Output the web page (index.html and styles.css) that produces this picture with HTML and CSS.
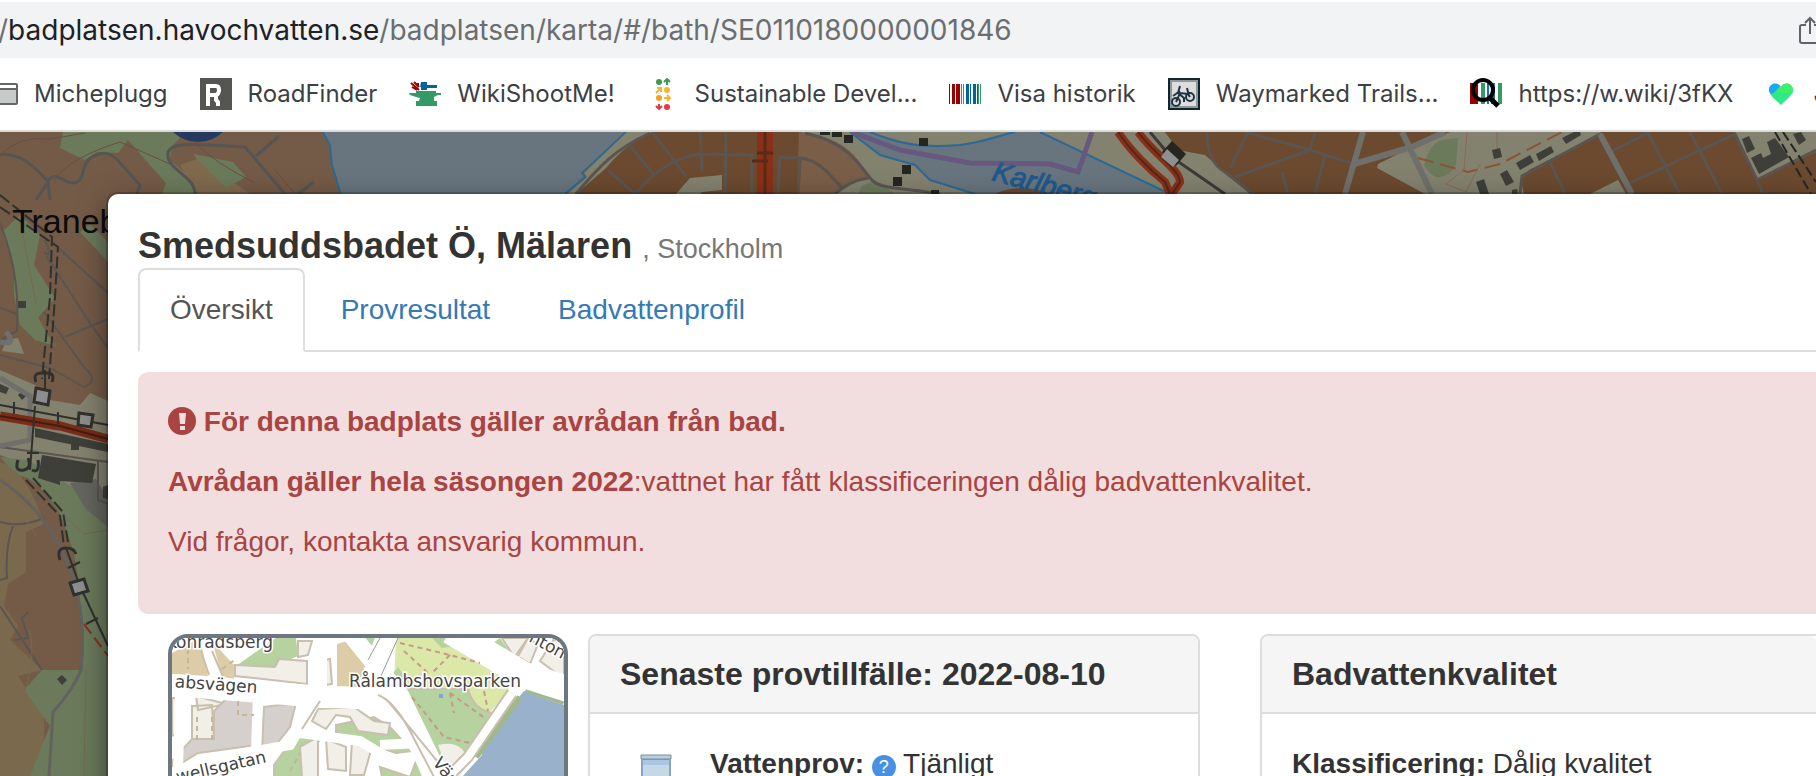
FILE: index.html
```html
<!DOCTYPE html>
<html lang="sv">
<head>
    <meta charset="UTF-8">
    <meta name="viewport" content="width=device-width, initial-scale=1.0">
    <title>Badplatsen</title>
    <link rel="stylesheet" href="styles.css">
</head>
<body>
    <header class="browser">
        <div class="address-bar">
            <div class="url"><span class="url-faded">/</span>badplatsen.havochvatten.se<span class="url-faded">/badplatsen/karta/#/bath/SE0110180000001846</span></div>
            <button class="btn-share" aria-label="Dela">
                <svg width="26" height="30" viewBox="0 0 26 30" fill="none" stroke="#5f6368" stroke-width="2">
                    <path d="M8 10H4a2 2 0 0 0-2 2v14a2 2 0 0 0 2 2h16a2 2 0 0 0 2-2V12a2 2 0 0 0-2-2h-4M12 19V3M7 8l5-5 5 5"/>
                </svg>
            </button>
        </div>
        <nav class="bookmarks">
            <a class="bookmark" href="#">
                <svg class="icon" viewBox="0 0 32 32">
                    <rect x="1" y="6" width="30" height="20" rx="1" fill="#c8c9c9" stroke="#666" stroke-width="2"/>
                    <path d="M2 8.500h28" stroke="#fff" stroke-width="3"/>
                    <path d="M2 11h28" stroke="#666" stroke-width="2"/>
                </svg>
                Micheplugg
            </a>
            <a class="bookmark" href="#">
                <svg class="icon" viewBox="0 0 32 32">
                    <path fill="#555552" d="M0 0h32v32H0z"/>
                    <path fill="none" stroke="#fff" stroke-width="4" d="M8 27V8h8q3 0 3 4t-3 5H8m8 0v5l2 2v4M6 26h4"/>
                </svg>
                RoadFinder
            </a>
            <a class="bookmark" href="#">
                <svg class="icon" viewBox="0 0 32 32">
                    <path fill="#396" d="M0 15h7v-2h20v2h5v2h-3l-4 2v4h3v5H7v-5h3l1-3-4-1-6-2z"/>
                    <path fill="#069" d="M12 4h6v3h10v3H18v2h-6V9h-1z"/>
                    <path stroke="#900" stroke-width="2" d="M2 5l8 7M5 4l5 5M3 9l5 3M9 5v3"/>
                </svg>
                WikiShootMe!
            </a>
            <a class="bookmark" href="#">
                <svg class="icon" viewBox="0 0 32 32" fill="none" stroke-width="2">
                    <circle cx="12" cy="4" r="3" fill="#3f9b4c"/>
                    <path stroke="#3f9b4c" d="M20 7V2M17 4l3-3 3 3"/>
                    <circle cx="20" cy="12" r="3" fill="#f9b42c"/>
                    <path stroke="#f9b42c" d="M9 15l5-5M10 10h4v4"/>
                    <circle cx="12" cy="20" r="3" fill="#f3a020"/>
                    <path stroke="#f9b42c" d="M17 20h6M20 17l3 3-3 3"/>
                    <circle cx="20" cy="29" r="3" fill="#e5354a"/>
                    <path stroke="#e5354a" d="M12 26v5M9 28l3 3 3-3"/>
                </svg>
                Sustainable Devel...
            </a>
            <a class="bookmark" href="#">
                <svg class="icon" viewBox="0 0 32 32">
                    <path fill="#900" d="M0 6h1v20H0zM3 6h3v20H3zM7 6h4v20H7z"/>
                    <path fill="#396" d="M12 6h1v20h-1zM14 6h1v20h-1zM29 6h1v20h-1zM31 6h1v20h-1z"/>
                    <path fill="#069" d="M17 6h3v20h-3zM21 6h1v20h-1zM24 6h3v20h-3zM28 6h1v20h-1z"/>
                </svg>
                Visa historik
            </a>
            <a class="bookmark" href="#">
                <svg class="icon" viewBox="0 0 32 32" fill="none">
                    <path fill="#ddd" stroke="#10262d" stroke-width="2" d="M1 1h30v30H1z"/>
                    <path stroke="#8d989e" stroke-width="2" d="M3 3h26v26H3z"/>
                    <g stroke="#1f3440" stroke-width="2">
                        <circle cx="22" cy="19" r="4"/>
                        <circle cx="8" cy="24" r="4"/>
                        <path d="M8 24l4-9 8 1 2 3M12 8l-2 7 6 5v4M19 10l2 8M5 18l7-5"/>
                    </g>
                </svg>
                Waymarked Trails...
            </a>
            <a class="bookmark" href="#">
                <svg class="icon" viewBox="0 0 32 32" fill="none">
                    <path fill="#900" d="M0 5h8v21H0z"/>
                    <path fill="#396" d="M11 5h4v21h-4zM28 5h4v21h-4z"/>
                    <path fill="#1f6fae" d="M17 5h2v21h-2zM21 5h4v21h-4z"/>
                    <circle cx="13" cy="12" r="10" stroke="#000" stroke-width="4"/>
                    <path stroke="#000" stroke-width="5" d="M19 19l9 9"/>
                </svg>
                https://w.wiki/3fKX
            </a>
            <a class="bookmark" href="#">
                <svg class="icon" viewBox="0 0 32 32">
                    <path fill="#2fe88a" d="M16 27C10 21 4 17 4 12c0-7 9-9 12-3 3-6 12-4 12 3 0 5-6 9-12 15z"/>
                    <path fill="#1aa7f5" d="M4 12c0-7 8-8 11-4-3 3-4 6-9 8q-2-2-2-4z"/>
                    <path fill="#3cf06a" d="M16 9c3-6 12-4 12 3q0 2-1 4L12 14z"/>
                </svg>
                J
            </a>
        </nav>
    </header>

    <main class="page">
        <svg class="map" viewBox="0 132 1816 644" preserveAspectRatio="xMinYMin slice" fill="none" aria-hidden="true">
            <path fill="#745b47" d="M0 132h1816v644H0z"/>
            <!-- Traneberg -->
            <path fill="#6b7a5b" d="M63 132l-3 16 25 12 12-8 21 1 10-13 22 25 16 18-4 11h34l-3-14-23-20 2-14 8-8-6-6z"/>
            <path fill="#7f6a4e" d="M180 165l20-7 50 36h-54z"/>
            <path fill="#6b7a5b" d="M193 154l40 8 13 15-20 11-12-12-16-16z"/>
            <circle cx="198" cy="106" r="36" fill="#253a63"/>
            <g stroke="#555553" stroke-width="3">
                <path d="M0 155c15-3 30 5 48 27l-12 18M48 182c4-10 12-4 20 0 20 6 10-17 24-25 13-7 20-4 30 8l18 20-5 15M48 182l2 18M195 194c0-19-30-24-27-42 4-10 22-8 77-5l40 47M256 156l23-20M298 194l16-12"/>
            </g>
            <g stroke="#6a4f40">
                <path d="M0 155q20-20 50-16l35-6M54 180q15-22 66-38l50 22M195 143q20 20 60 40M275 170l20 24"/>
            </g>
            <!-- Ulvsundasjön -->
            <path fill="#68757f" d="M323 132l7 13 2 20 6 20 3 9h224l20-17-3-4 44-41z"/>
            <path stroke="#2c6a94" stroke-width="2" d="M323 132l7 13 2 20 6 20 3 9M626 132l-44 41 3 4-20 17"/>
            <path fill="#83826f" d="M627 132h580v62H567l20-17-3-4z"/>
            <path fill="#6b4a2f" d="M652 132c-24 12-36 24-46 36l-30 26h275l-50-62z"/>
            <path fill="#7a5e48" d="M799 132c40 4 60 22 71 48l-30 14h-43z"/>
            <path fill="#83826f" d="M676 194l14-16 32-3v15l-20 2-2 2zM835 194q20-18 37-14l40 14z"/>
            <path fill="#6b7a5b" d="M858 194l4-8 13-6 20 14z"/>
            <g stroke="#5a5550" stroke-width="3">
                <path d="M576 194c24-29 40-45 74-61M652 132l34 44M630 146l25 30M608 170l27 24M635 194c25-29 45-37 65-40l54 1M700 132l2 40M726 132l-1 62M752 158v36M778 194l2-37 20 1c20 2 30 17 42 30M800 160l-2 34M805 133c45 9 57 37 67 47 8 10 38 8 68 14M835 194c10-9 20-14 33-16"/>
            </g>
            <path stroke="#8a3019" stroke-width="16" d="M765 132v62"/>
            <path stroke="#5a2a18" stroke-width="3" d="M765 132v62M757 153h16M752 161h16"/>
            <path fill="#68757f" d="M850 132l30 23 35 10 15 15 45 14h192l-127-62h-25c-30 4-40 14-78 13-27 0-47-8-67-13z"/>
            <path stroke="#2c6a94" stroke-width="2" d="M850 132l30 23 35 10 15 15 45 14M1040 132l130 62M870 132c20 8 40 17 90 13 25-3 40-10 55-13"/>
            <path stroke="#66587f" stroke-width="5" d="M852 132l48 18 70 13 80 1 28 8 14-40"/>
            <path fill="#6b4a2f" d="M995 194q26-12 56 0z"/>
            <path fill="#252522" d="M820 132h10v3h-10zM832 132h10v5h-10zM844 135h9v8h-9zM919 138h9v8h-9zM902 165h9v9h-9zM893 177h9v9h-9zM931 190h8v4h-8z"/>
            <text class="map-water" transform="rotate(15 991 180)" x="991" y="180">Karlbergs-</text>
            <!-- Vasastan -->
            <path fill="#83826f" d="M1200 132h616v62h-616z"/>
            <path fill="#6b4a2f" d="M1165 132l13 18 27 5 20 17 25 22h175l-48-26 1-4 32-16 40-16z"/>
            <path stroke="#3a3a37" stroke-width="3" d="M1150 132l20 24 55 38"/>
            <g stroke="#8a3019" stroke-width="8">
                <path d="M1118 132c12 18 32 38 47 50l5 12M1138 132c17 23 42 38 42 50l-8 12"/>
            </g>
            <path stroke="#52281a" stroke-width="2" d="M1118 132c12 18 32 38 47 50l5 12M1138 132c17 23 42 38 42 50l-8 12"/>
            <path stroke="#83826f" stroke-width="2" d="M1129 132c12 18 30 35 46 50"/>
            <path fill="#252522" d="M1172 141l14 13-10 12-14-14z"/>
            <path fill="#8f8f8f" d="M1167 149l12 11-6 7-12-10z"/>
            <g stroke="#5a5550" stroke-width="3">
                <path d="M1207 132q0 30 18 40l28 22M1248 132l-18 36M1245 132l65 18 44 14M1310 150l-75 27M1315 132l-5 18M1325 155l-10 39M1282 172l6 22"/>
            </g>
            <path stroke="#6f706c" stroke-width="6" d="M1363 132l-18 62M1354 164l58-17 33-15M1402 132l30 62"/>
            <path fill="#6b7a5b" d="M1458 138l-2 27q-8 14-20 12-8-4-12-12 6-22 18-25z"/>
            <path stroke="#8a5436" stroke-width="2" stroke-dasharray="16 7" d="M1418 158l50 14 32-8 62-32"/>
            <path stroke="#8a6a55" d="M1467 132l-3 38-18 14 20 8 14-28M1497 132v20"/>
            <path fill="#3f3f3a" d="M1492 150l8-2 2 9-8 2zM1516 163l14-8 4 7-14 8zM1536 154l15-8 3 6-15 9zM1562 138l12-6h6l1 3-15 9zM1500 174l7-4 7 12-8 4zM1476 182l8-3 5 15h-9zM1512 190l5-1 1 5h-6z"/>
            <path fill="#6b4a2f" d="M1524 194l-3-14 8-10 71-36 32 60zM1600 132h134l23 47 59-27v42h-184z"/>
            <path fill="#83826f" d="M1590 194l28-14 8 14z"/>
            <path stroke="#5a5550" stroke-width="3" d="M1520 194l2-18 78-42M1612 151l36-18 32 61M1690 132l32 62M1630 183l105-49 22 46 59-30M1757 180l6 14M1550 162l15 32"/>
            <path stroke="#6f706c" stroke-width="6" d="M1600 134l32 60"/>
            <path fill="#3f3f3a" d="M1742 139l7-3 6 13-8 4zM1751 158l10-5 2 5 8-4-4-12 8-4 14 19-30 17zM1793 134l8-2 5 8-7 5z"/>
            <path stroke="#252522" stroke-width="2" stroke-dasharray="10 4" d="M1775 132l36 62M1783 132l33 50"/>
            <!-- Alvik -->
            <path fill="#6b7a5b" d="M2 232l18-17 20 20-6 30 21 33-17 20 17 28-20-6-15-15-6-30v-30zM80 232l28 30v-20l-18-18z"/>
            <path fill="#83826f" d="M0 370l35 15 15 15 30 5 10-12 18 8v120L50 475l-50-20zM6 340l12-2 6 16-22-3z"/>
            <path fill="#6b7a5b" d="M0 457l28 3 32 20 48 25v271H40l40-106-20-130-40-60z"/>
            <path fill="#65655f" d="M70 483l26-4 12 20v28l-22-18z"/>
            <path fill="#745b47" d="M28 478q30 20 40 58 14 30 14 134H40L0 630V470z"/>
            <path fill="#7a694c" d="M0 462q28 10 44 62l-18 8 0 40-18 12-4 22 14 20-8 14 32 30-24 6 26 40v60H0z"/>
            <path fill="#6b7a5b" d="M42 670h38l-28 106H30l20-50-26-36z"/>
            <path fill="#3f3f3a" d="M42 455l54 9-4 19-32-2v4l-22-7zM0 384l9 4-3 6-6-2zM18 395l5-5 4 5-5 5zM35 428l73 16v8l-73-15zM71 443h8v7h-8zM57 679l5-4 5 5-5 5zM18 301h8v7h-8zM103 487l5-2v14l-5-1z"/>
            <g stroke="#5a5550" stroke-width="2">
                <path d="M0 223q20 50 17 100v8l-15 8M0 308l17 6M45 240q8 20-1 12M46 256q20 30 46 70l16 22M44 312l40 55q16 14 0 20L50 368 0 355M65 337l43-18M55 245l53 48M0 522q20 6 44-4M13 526q-8 20-6 52l-7 2M0 606l42 64M14 640l14-2-6-20 6-6M0 447l108 15M98 460v40l10 4"/>
            </g>
            <path stroke="#62625e" stroke-width="3" d="M0 480c60 40 90 110 81 190q-8 20-28 42l-4 64"/>
            <path stroke="#6f706c" stroke-width="5" d="M0 342q18 4 6-10M0 378l30 18v44l-30 6"/>
            <path stroke="#756a50" d="M20 220l16 84M0 740q40-60 30-110M86 670l-2 106M48 500l36 34 24-4M0 500q30 20 36 36M60 430q-14 0-24-6"/>
            <path stroke="#7a2c17" stroke-width="9" d="M0 416l60 10 48 13"/>
            <path stroke="#451c12" stroke-width="2" d="M0 416l60 10 48 13"/>
            <g stroke="#30302d" stroke-width="2">
                <path d="M0 405l108 20M14 402v12M58 412v12M35 406l-5 64M27 453h12M45 370v20M66 548l14 38 28 60M68 568l12-6M86 624l12-6"/>
                <path stroke-dasharray="12 4" d="M0 195l52 42-2 60-8 82M0 207l58 40-3 50-6 82M26 480l34 36 4 30M33 478l30 34 5 30"/>
                <path stroke-width="3" d="M36 382q-4-10 8-9 12-1 8 9M18 460q-4 12 6 10 8-2 4-12M38 460q2 14-6 10M60 560q-4-12 6-12 8 0 10 6"/>
                <path fill="#8d8d8d" stroke-width="3" d="M36 388l14 3-2 14-14-3zM79 413l14 2-2 12-13-2zM70 583l14-4 4 12-14 4z"/>
            </g>
            <path stroke="#8a3019" stroke-width="2" stroke-dasharray="12 5" d="M84 624l24 32"/>
            <text class="map-place" x="12" y="233">Traneberg</text>
        </svg>

        <section class="modal">
            <h1 class="title">Smedsuddsbadet Ö, Mälaren <small>, Stockholm</small></h1>
            <nav class="tabs">
                <a class="tab active" href="#">Översikt</a>
                <a class="tab" href="#">Provresultat</a>
                <a class="tab" href="#">Badvattenprofil</a>
            </nav>
            <div class="alert">
                <p>
                    <svg class="alert-icon" viewBox="0 0 28 28">
                        <circle cx="14" cy="14" r="14" fill="#a94442"/>
                        <path fill="#f2dede" d="M11 6h7l-1 11h-5zM12 19h5v4h-5z"/>
                    </svg>
                    <b>För denna badplats gäller avrådan från bad.</b>
                </p>
                <p><b>Avrådan gäller hela säsongen 2022</b>:vattnet har fått klassificeringen dålig badvattenkvalitet.</p>
                <p>Vid frågor, kontakta ansvarig kommun.</p>
            </div>
            <div class="row">
                <a class="thumb" href="#" aria-label="Karta">
                    <svg viewBox="172 637 392 139" preserveAspectRatio="xMinYMin slice" fill="none">
                        <path fill="#fff" d="M172 637h392v139H172z"/>
                        <path fill="#dccda8" d="M172 652l28-15 8 38-36-2zM212 640l22 24v14l-20-4zM337 643l14-4 16 28-10 22h-20z"/>
                        <path fill="#b5d29f" d="M236 665l14-10 26-18h20l2 18-14 6-8 4zM356 637h24l-12 20zM500 637l10 14-24-4z"/>
                        <g fill="#f2efe9" stroke="#c8bfae" stroke-width="2">
                            <path d="M235 664l40 2 4-8 28 2v23l-72-8zM320 660l10-2 2 25-12 2zM298 640h14l-4 14-10 2zM502 637h26l-12 22zM540 660l14-22 10 4v36zM516 654l12-17 10 6-8 20z"/>
                            <path d="M172 697h8v34l-8 4zM192 705l20-1 2 34-22 4zM196 695l30 8-28 6z"/>
                        </g>
                        <path fill="#d5d0cb" stroke="#c8bfae" stroke-width="2" d="M214 710l14-14 30 4v44l-60 8-26 16v-8l20-22 22 0zM264 706l32-4-6 24-14 18-14 4z"/>
                        <path fill="#b5d29f" stroke="#c8bfae" stroke-width="2" d="M274 764l26-36 20 10-10 18 8 20h-44zM336 724l38-8 16 10 22 24-16 2-60-20zM380 766l30 10 10-26 8 26h-46z"/>
                        <path fill="#f2efe9" stroke="#c8bfae" stroke-width="2" d="M312 720l6-12 36-2 20 14 16 2-2 12-30-4-8-14-14-2-10 14zM300 746l18-10v40h-16zM326 738l20 8v24l-18-2zM352 740l20 6-8 28h-14z"/>
                        <path fill="#dbe8a8" d="M396 637h58l60 34-6 18 2 0-22 24-20-10-74-18z"/>
                        <path fill="#b5d29f" stroke="#c8bfae" stroke-width="2" d="M400 688l68 0q6 22 26 24l-34 50-20-6z"/>
                        <path fill="#b5d29f" d="M388 678l10-12 10 14zM432 637h20l4 8-14 2z"/>
                        <path fill="#f2efe9" d="M438 744q26-6 30 18l-8 14h-10z"/>
                        <path fill="#99b1cb" d="M524 690l40 14v72H462l20-22-2-12z"/>
                        <path stroke="#9fb98a" stroke-width="6" d="M520 696l-44 60M526 688l38 13"/>
                        <path stroke="#c8bfae" stroke-width="12" d="M512 692l-44 64-20 20"/>
                        <path stroke="#fff" stroke-width="8" d="M512 692l-44 64-20 20"/>
                        <g stroke="#fff">
                            <path stroke-width="22" d="M172 684l150 12q40 0 60 4 28 14 52 76"/>
                            <path stroke-width="18" d="M350 632l50 62 40 82"/>
                            <path stroke-width="22" d="M388 632l-22 64"/>
                            <path stroke-width="26" d="M450 630l74 44 50 16"/>
                            <path stroke-width="10" d="M206 637l12 42M258 690l-2 60M316 700l-26 44-80 14-40 14M180 690l-2 80M300 732l60 8 40 24M322 640v50M380 744l40-2"/>
                        </g>
                        <path stroke="#c8bfae" stroke-width="2" d="M212 650l12 28M201 650l8 24M320 700l-18 28M434 776l-24-46q-16-30-32-36M388 700l54 66"/>
                        <path stroke="#999" d="M398 637l-18 40M380 637l-12 22"/>
                        <g stroke="#c59a8a" stroke-width="2" stroke-dasharray="5 4">
                            <path d="M400 642l50 12 30 8M404 650l24 22M450 654l-18 18M412 696l32 40 26 6M450 692l4 20M450 692l36 26M484 690l4 20"/>
                        </g>
                        <path stroke="#c5b795" stroke-width="2" stroke-dasharray="5 4" d="M197 716v24M212 716v24M238 700v14h16M188 648v20M222 668l14-10M290 770l10-18"/>
                        <path fill="#7fa6d8" d="M439 693h4v4h-4z"/>
                        <g class="thumb-label">
                            <text x="273" y="647" text-anchor="end">Konradsberg</text>
                            <text transform="rotate(4 257 692)" x="257" y="692" text-anchor="end">absvägen</text>
                            <text x="349" y="686">Rålambshovsparken</text>
                            <text transform="rotate(-13 267 761)" x="267" y="761" text-anchor="end">wellsgatan</text>
                            <text transform="rotate(52 432 762)" x="432" y="762">Väs</text>
                            <text transform="rotate(28 528 640)" x="528" y="640">nton</text>
                        </g>
                    </svg>
                </a>
                <div class="panel">
                    <h2 class="panel-heading">Senaste provtillfälle: 2022-08-10</h2>
                    <div class="panel-body">
                        <svg class="beaker" width="32" height="48" viewBox="0 0 32 48">
                            <path fill="#c5d8e6" stroke="#86a5c6" stroke-width="2" d="M2 5h28v42H2z"/>
                            <path fill="#a9c7e3" d="M3 6h26v5H3z"/>
                            <path fill="#b8d0e5" stroke="#7d8a96" d="M1 1h30v4H1z"/>
                        </svg>
                        <div>
                            <b>Vattenprov:</b>
                            <button class="btn-help" aria-label="Hjälp">?</button>
                            Tjänligt
                        </div>
                    </div>
                </div>
                <div class="panel">
                    <h2 class="panel-heading">Badvattenkvalitet</h2>
                    <div class="panel-body"><div><b>Klassificering:</b> Dålig kvalitet</div></div>
                </div>
            </div>
        </section>
    </main>
</body>
</html>
```
FILE: styles.css
```css
* {box-sizing: border-box;}
body {
    margin: 0;
    height: 100vh;
    overflow: hidden;
    display: flex;
    flex-direction: column;
    font-family: "Liberation Sans", Arial, sans-serif;
    font-size: 28px;
    line-height: 40px;
    color: #333;
    background-color: #fff;
}
a {
    text-decoration: none;
}
button {
    border: 0;
    padding: 0;
    background: none;
    cursor: pointer;
}
.browser {
    padding-top: 2px;
    border-bottom: 2px solid #d9dcde;
    font-family: Inter, sans-serif;
}
.address-bar {
    display: flex;
    justify-content: space-between;
    align-items: center;
    height: 56px;
    background-color: #f1f3f4;
}
.url {
    margin-left: -2px;
    color: #202124;
    white-space: nowrap;
}
.url-faded {
    color: #6b6e71;
}
.btn-share {
    margin-right: -8px;
    height: 30px;
}
.bookmarks {
    display: flex;
    gap: 32px;
    height: 72px;
    margin-left: -14px;
    align-items: center;
}
.bookmark {
    display: flex;
    flex: none;
    align-items: center;
    gap: 16px;
    font-size: 24px;
    color: #3c4043;
    white-space: nowrap;
}
.icon {
    width: 32px;
    height: 32px;
    flex: none;
}
.page {
    position: relative;
    flex: 1;
    min-height: 0;
    overflow: hidden;
    padding: 62px 0 0 108px;
}
.map {
    position: absolute;
    top: 0;
    left: 0;
    width: 100%;
    height: 100%;
}
.map-place {
    font-size: 34px;
    fill: #0c0c0c;
}
.map-water {
    font-size: 28px;
    font-style: italic;
    fill: #1f5a8c;
    stroke: #1f5a8c;
}
.modal {
    position: relative;
    min-height: 100%;
    padding: 30px 0 0 30px;
    background-color: #fff;
    border-radius: 10px 0 0 0;
    box-shadow: 0 0 0 2px rgba(0, 0, 0, .2), 0 10px 30px rgba(0, 0, 0, .5);
}
.title {
    margin: 0;
    font-size: 36px;
    line-height: 44px;
    font-weight: bold;
}
.title small {
    font-size: 27px;
    line-height: 27px;
    font-weight: normal;
    color: #777;
}
.tabs {
    display: flex;
    gap: 4px;
    border-bottom: 2px solid #ddd;
}
.tab {
    padding: 20px 30px;
    margin-bottom: -2px;
    border: 2px solid transparent;
    border-radius: 8px 8px 0 0;
    color: #337ab7;
}
.tab.active {
    color: #555;
    background-color: #fff;
    border-color: #ddd;
    border-bottom-color: #fff;
}
.alert {
    margin: 20px 0;
    padding: 28px 30px 30px;
    background-color: #f2dede;
    border: 2px solid #f2dede;
    border-width: 2px 0;
    border-bottom-color: #e3e0de;
    border-radius: 10px 0 0 10px;
    color: #a94442;
}
.alert p {
    margin: 0 0 20px;
}
.alert-icon {
    width: 28px;
    height: 28px;
    vertical-align: -4px;
}
.row {
    display: grid;
    grid-template-columns: 400px 632fr 616fr;
    padding-left: 30px;
}
.thumb {
    height: 300px;
    border: 4px solid #6c7780;
    border-radius: 20px;
    overflow: hidden;
}
.thumb svg {
    display: block;
    width: 392px;
    height: 139px;
}
.thumb-label {
    font-family: "DejaVu Sans", sans-serif;
    font-size: 17px;
    fill: #444;
    stroke: #fff;
    stroke-width: 3px;
    paint-order: stroke;
}
.panel {
    height: 300px;
    margin-left: 20px;
    border: 2px solid #ddd;
    border-radius: 8px;
}
.panel:last-child {
    margin-left: 60px;
    border-right: 0;
    border-radius: 8px 0 0 8px;
}
.panel-heading {
    margin: 0;
    padding: 18px 30px;
    font-size: 32px;
    background-color: #f5f5f5;
    border-bottom: 2px solid #ddd;
    border-radius: 6px 6px 0 0;
}
.panel-body {
    display: flex;
    gap: 38px;
    padding: 30px;
}
.beaker {
    margin: 10px 0 0 20px;
}
.btn-help {
    width: 24px;
    height: 24px;
    border-radius: 50%;
    background-color: #4a90e2;
    color: #fff;
    font-size: 18px;
    line-height: 24px;
}
```
